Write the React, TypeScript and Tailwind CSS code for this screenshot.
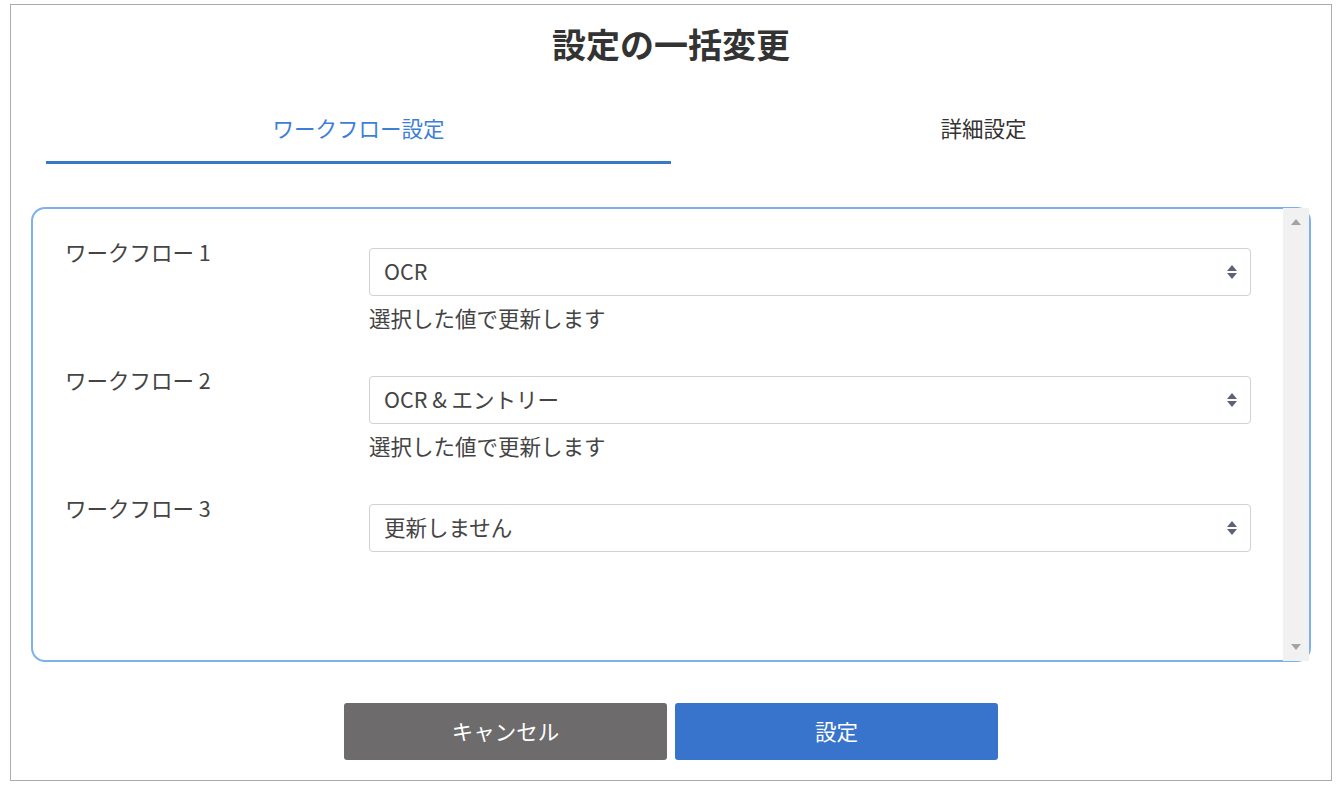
import React from "react";

function Caret() {
  return (
    <svg width="12" height="18" viewBox="0 0 12 18" className="shrink-0">
      <path d="M6 2 L11 8 L1 8 Z" fill="#5b6279" />
      <path d="M1 10 L11 10 L6 16 Z" fill="#5b6279" />
    </svg>
  );
}

function Row({ label, value, helper }: { label: string; value: string; helper?: string }) {
  return (
    <div className="flex items-start">
      <div className="w-[304px] leading-[28px] text-[#444] shrink-0">{label}</div>
      <div className="flex-1 pt-[10px]">
        <div className="h-[48px] border border-[#cfd0d8] rounded-[4px] flex items-center justify-between pl-[14px] pr-[12px] text-[#444] bg-white">
          <span className="leading-[32px] pb-[2px]">{value}</span>
          <Caret />
        </div>
        {helper && <div className="mt-[8px] leading-[28px] text-[#444]">{helper}</div>}
      </div>
    </div>
  );
}

export default function App() {
  return (
    <div className="w-[1340px] h-[790px] bg-white font-['Noto_Sans_CJK_JP','Noto_Sans',sans-serif] text-[21.5px] overflow-hidden">
      <div className="ml-[10px] mt-[4px] w-[1322px] h-[777px] border border-[#ababab] flex flex-col">
        <h1 className="mt-[14px] text-center text-[34px] font-bold leading-[50px] text-[#333]">設定の一括変更</h1>
        <div className="mx-[35px] mt-[44px] flex">
          <div className="flex-1 text-center leading-[30px] pb-[18px] border-b-[3px] border-[#3a78c9] text-[#3d7fd6]">ワークフロー設定</div>
          <div className="flex-1 text-center leading-[30px] pb-[18px] border-b-[3px] border-transparent text-[#333]">詳細設定</div>
        </div>
        <div className="relative mx-[20px] mt-[43px] h-[455px] rounded-[14px] border-2 border-[#7cb0ee]">
          <div className="pl-[32px] pr-[58px] pt-[29px] flex flex-col gap-[34px]">
            <Row label="ワークフロー 1" value="OCR" helper="選択した値で更新します" />
            <Row label="ワークフロー 2" value="OCR & エントリー" helper="選択した値で更新します" />
            <Row label="ワークフロー 3" value="更新しません" />
          </div>
          <div className="absolute top-[-1px] bottom-[-1px] right-0 w-[26px] bg-[#f1f1f1] flex flex-col justify-between items-center pt-[11px] pb-[11px]">
            <svg width="10" height="6" viewBox="0 0 10 6"><path d="M5 0 L10 6 L0 6 Z" fill="#a3a3a3" /></svg>
            <svg width="10" height="6" viewBox="0 0 10 6"><path d="M0 0 L10 0 L5 6 Z" fill="#a3a3a3" /></svg>
          </div>
        </div>
        <div className="mt-[41px] flex justify-center gap-[8px]">
          <button className="w-[323px] h-[57px] rounded-[3px] bg-[#6d6b6b] text-white text-[21.5px] leading-[30px] pb-[2px]">キャンセル</button>
          <button className="w-[323px] h-[57px] rounded-[3px] bg-[#3874cc] text-white text-[21.5px] leading-[30px] pb-[2px]">設定</button>
        </div>
      </div>
    </div>
  );
}
